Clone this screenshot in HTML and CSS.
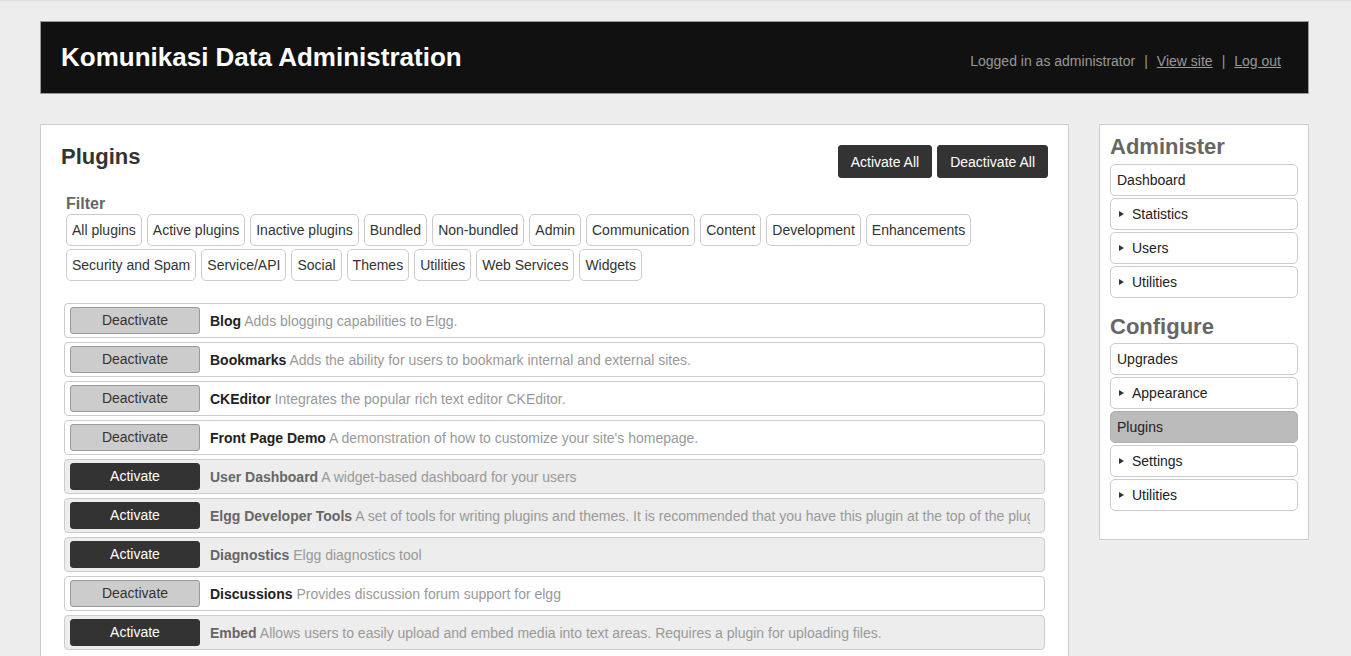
FILE: index.html
```html
<!DOCTYPE html>
<html>
<head>
<meta charset="utf-8">
<title>Plugins : Komunikasi Data Administration</title>
<link rel="stylesheet" href="styles.css">
</head>
<body>
<div class="page">
  <header class="topbar">
    <h1 class="site-title">Komunikasi Data Administration</h1>
    <div class="user-links">
      <span>Logged in as administrator</span>
      <span class="sep">|</span>
      <a href="#">View site</a>
      <span class="sep">|</span>
      <a href="#">Log out</a>
    </div>
  </header>

  <div class="layout">
    <main class="main-box">
      <div class="title-row">
        <h2 class="page-title">Plugins</h2>
        <div class="bulk-actions">
          <button class="btn-dark">Activate All</button>
          <button class="btn-dark">Deactivate All</button>
        </div>
      </div>

      <div class="filter">
        <div class="filter-label">Filter</div>
        <ul class="filter-list">
          <li>All plugins</li>
          <li>Active plugins</li>
          <li>Inactive plugins</li>
          <li>Bundled</li>
          <li>Non-bundled</li>
          <li>Admin</li>
          <li>Communication</li>
          <li>Content</li>
          <li>Development</li>
          <li>Enhancements</li>
          <li>Security and Spam</li>
          <li>Service/API</li>
          <li>Social</li>
          <li>Themes</li>
          <li>Utilities</li>
          <li>Web Services</li>
          <li>Widgets</li>
        </ul>
      </div>

      <ul class="plugin-list">
        <li class="plugin active">
          <button class="btn-deactivate">Deactivate</button>
          <div class="plugin-text"><b>Blog</b> <span class="desc">Adds blogging capabilities to Elgg.</span></div>
        </li>
        <li class="plugin active">
          <button class="btn-deactivate">Deactivate</button>
          <div class="plugin-text"><b>Bookmarks</b> <span class="desc">Adds the ability for users to bookmark internal and external sites.</span></div>
        </li>
        <li class="plugin active">
          <button class="btn-deactivate">Deactivate</button>
          <div class="plugin-text"><b>CKEditor</b> <span class="desc">Integrates the popular rich text editor CKEditor.</span></div>
        </li>
        <li class="plugin active">
          <button class="btn-deactivate">Deactivate</button>
          <div class="plugin-text"><b>Front Page Demo</b> <span class="desc">A demonstration of how to customize your site's homepage.</span></div>
        </li>
        <li class="plugin inactive">
          <button class="btn-activate">Activate</button>
          <div class="plugin-text"><b>User Dashboard</b> <span class="desc">A widget-based dashboard for your users</span></div>
        </li>
        <li class="plugin inactive">
          <button class="btn-activate">Activate</button>
          <div class="plugin-text"><b>Elgg Developer Tools</b> <span class="desc">A set of tools for writing plugins and themes. It is recommended that you have this plugin at the top of the plugin list.</span></div>
        </li>
        <li class="plugin inactive">
          <button class="btn-activate">Activate</button>
          <div class="plugin-text"><b>Diagnostics</b> <span class="desc">Elgg diagnostics tool</span></div>
        </li>
        <li class="plugin active">
          <button class="btn-deactivate">Deactivate</button>
          <div class="plugin-text"><b>Discussions</b> <span class="desc">Provides discussion forum support for elgg</span></div>
        </li>
        <li class="plugin inactive">
          <button class="btn-activate">Activate</button>
          <div class="plugin-text"><b>Embed</b> <span class="desc">Allows users to easily upload and embed media into text areas. Requires a plugin for uploading files.</span></div>
        </li>
      </ul>
    </main>

    <aside class="sidebar">
      <section class="menu-section">
        <h3 class="menu-title">Administer</h3>
        <ul class="menu">
          <li>Dashboard</li>
          <li class="has-children"><span class="arrow"></span>Statistics</li>
          <li class="has-children"><span class="arrow"></span>Users</li>
          <li class="has-children"><span class="arrow"></span>Utilities</li>
        </ul>
      </section>
      <section class="menu-section">
        <h3 class="menu-title menu-title-second">Configure</h3>
        <ul class="menu">
          <li>Upgrades</li>
          <li class="has-children"><span class="arrow"></span>Appearance</li>
          <li class="selected">Plugins</li>
          <li class="has-children"><span class="arrow"></span>Settings</li>
          <li class="has-children"><span class="arrow"></span>Utilities</li>
        </ul>
      </section>
    </aside>
  </div>
</div>
</body>
</html>
```

FILE: styles.css
```css
* { box-sizing: border-box; }

html, body {
  margin: 0;
  padding: 0;
}

body {
  background: #ededed;
  border-top: 1px solid #dcdcdc;
  font-family: "Liberation Sans", Arial, sans-serif;
  font-size: 14px;
  color: #333;
}

ul { list-style: none; margin: 0; padding: 0; }

button {
  font-family: "Liberation Sans", Arial, sans-serif;
  font-size: 14px;
  cursor: pointer;
}

.page {
  width: 1269px;
  margin-left: 40px;
  padding-top: 20px;
}

/* Top bar */
.topbar {
  display: flex;
  justify-content: space-between;
  align-items: baseline;
  height: 73px;
  padding: 0 27px 0 20px;
  background: #111;
  border: 1px solid #999;
}

.site-title {
  margin: 0;
  font-size: 26px;
  line-height: 71px;
  font-weight: bold;
  color: #fff;
}

.user-links {
  display: flex;
  gap: 9px;
  color: #999;
  font-size: 14px;
}

.user-links a {
  color: #999;
  text-decoration: underline;
}

/* Layout */
.layout {
  display: flex;
  gap: 30px;
  margin-top: 30px;
  align-items: flex-start;
}

.main-box {
  width: 1029px;
  flex: none;
  background: #fff;
  border: 1px solid #ccc;
  padding: 20px;
}

.title-row {
  display: flex;
  justify-content: space-between;
  align-items: flex-start;
}

.page-title {
  margin: 0;
  padding-top: 1px;
  font-size: 22px;
  line-height: 22px;
  font-weight: bold;
  color: #333;
}

.bulk-actions {
  display: flex;
  gap: 5px;
}

.btn-dark {
  height: 33px;
  padding: 0 12px;
  background: #333;
  color: #fff;
  border: 1px solid #333;
  border-radius: 3px;
}

/* Filter */
.filter {
  margin-top: 17px;
  padding-left: 5px;
}

.filter-label {
  font-size: 16px;
  line-height: 18px;
  font-weight: bold;
  color: #666;
}

.filter-list {
  display: flex;
  flex-wrap: wrap;
  gap: 3px 5px;
  margin-top: 1px;
}

.filter-list li {
  padding: 6px 5px;
  line-height: 18px;
  border: 1px solid #ccc;
  border-radius: 5px;
  color: #333;
  background: #fff;
}

/* Plugin list */
.plugin-list {
  margin: 22px 3px 0 3px;
}

.plugin {
  display: flex;
  align-items: center;
  height: 35px;
  margin-bottom: 4px;
  padding: 3px 14px 3px 5px;
  border: 1px solid #ccc;
  border-radius: 4px;
}

.plugin.active { background: #fff; }
.plugin.inactive { background: #ededed; }

.btn-deactivate,
.btn-activate {
  flex: none;
  width: 130px;
  height: 27px;
  padding: 0;
  border-radius: 3px;
  line-height: 25px;
}

.btn-deactivate {
  background: #ccc;
  border: 1px solid #999;
  color: #333;
}

.btn-activate {
  background: #333;
  border: 1px solid #333;
  color: #fff;
}

.plugin-text {
  flex: 1;
  min-width: 0;
  margin-left: 10px;
  white-space: nowrap;
  overflow: hidden;
  line-height: 18px;
}

.plugin-text b { color: #222; }
.plugin.inactive .plugin-text b { color: #666; }
.plugin-text .desc { color: #999; }

/* Sidebar */
.sidebar {
  width: 210px;
  flex: none;
  background: #fff;
  border: 1px solid #ccc;
  padding: 11px 10px 10px 10px;
}

.menu-section { margin-bottom: 18px; }

.menu-title {
  margin: 0 0 6px 0;
  font-size: 22px;
  line-height: 22px;
  font-weight: bold;
  color: #666;
}

.menu-title-second { margin-bottom: 5px; }

.menu li {
  display: flex;
  align-items: center;
  padding: 6px 6px;
  line-height: 18px;
  margin-bottom: 2px;
  border: 1px solid #ccc;
  border-radius: 5px;
  background: #fff;
  color: #222;
}

.menu li.selected {
  background: #bbb;
  border-color: #b0b0b0;
}

.arrow {
  display: inline-block;
  width: 0;
  height: 0;
  margin: 0 8px 0 2px;
  border-left: 5px solid #333;
  border-top: 3px solid transparent;
  border-bottom: 3px solid transparent;
}
```
